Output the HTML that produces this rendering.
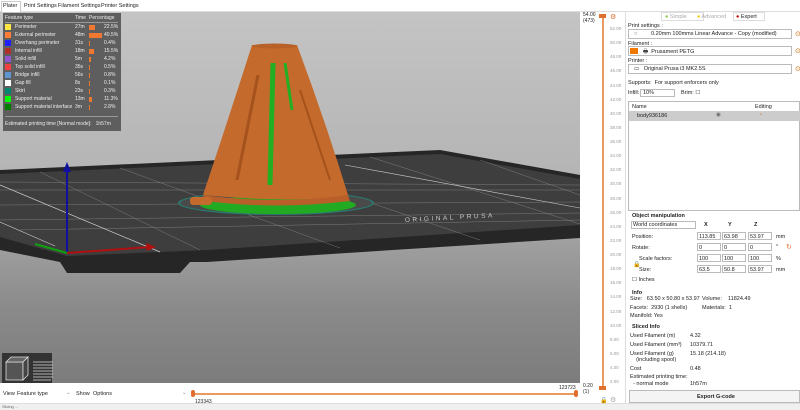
<!DOCTYPE html>
<html><head><meta charset="utf-8"><style>
*{margin:0;padding:0;box-sizing:border-box}
body{width:800px;height:410px;overflow:hidden;background:#fff;font-family:"Liberation Sans",sans-serif;font-size:5.5px;color:#222;position:relative}
.a{position:absolute;white-space:nowrap}
.box{position:absolute;border:1px solid #bbb;background:#fff}
.lg{color:#eee;font-size:5px}
.sw{position:absolute;width:6px;height:6px;left:5px}
</style></head><body>
<!-- tabs -->
<div class="a" style="left:0;top:0;width:800px;height:12px;background:#fff;border-bottom:1px solid #ddd"></div>
<div class="a" style="left:1px;top:1px;width:20px;height:11px;border:1px solid #ccc;border-bottom:none;background:#fff"></div>
<div class="a" style="left:3px;top:3px">Plater</div>
<div class="a" style="left:24px;top:3px">Print Settings</div>
<div class="a" style="left:58px;top:3px">Filament Settings</div>
<div class="a" style="left:101px;top:3px">Printer Settings</div>
<!-- canvas -->
<div class="a" style="left:0;top:12px;width:580px;height:371px;background:linear-gradient(#c4c4c4,#b4b4b4 45%,#8a8a8a 80%,#7c7c7c 100%)"></div>
<svg class="a" style="left:0;top:0" width="580" height="383">
<polygon points="0,170 440,150 580,175 580,238 207,262 190,262 180,273 67,273 60,262 0,250" fill="#262626"/>
<polygon points="0,174 440,154 580,179 580,225 207,250 67,256 0,237" fill="#3e3e3e"/>
<g stroke="#8a8a8a" stroke-width="0.4">
<line x1="0" y1="190" x2="580" y2="190"/><line x1="0" y1="205" x2="580" y2="202"/><line x1="0" y1="220" x2="580" y2="213"/>
<line x1="0" y1="182" x2="580" y2="185"/><line x1="20" y1="230" x2="580" y2="220"/>
<line x1="120" y1="168" x2="340" y2="248"/><line x1="250" y1="162" x2="480" y2="240"/><line x1="370" y1="157" x2="580" y2="224"/><line x1="40" y1="172" x2="200" y2="250"/><line x1="480" y1="160" x2="580" y2="195"/>
</g>
<line x1="0" y1="185" x2="160" y2="252" stroke="#cfcfcf" stroke-width="0.7"/>
<line x1="345" y1="165" x2="580" y2="208" stroke="#cfcfcf" stroke-width="0.6"/>
<line x1="0" y1="222" x2="55" y2="246" stroke="#cfcfcf" stroke-width="0.6"/>
<text x="405" y="222" fill="#c8c8c8" font-size="6.5" font-family="Liberation Sans" transform="rotate(-3 405 222)" letter-spacing="2.5">ORIGINAL PRUSA</text>
<ellipse cx="276" cy="203" rx="98" ry="12" fill="#2a7a70"/>
<ellipse cx="276" cy="203" rx="96" ry="10.5" fill="#4a4a4a"/>
<ellipse cx="278" cy="205" rx="78" ry="9" fill="#22aa22"/>
<path d="M252,45 L297,45 Q325,120 348,195 Q300,204 203,195 Q228,120 252,45 Z" fill="#c46a2c"/>
<ellipse cx="274.5" cy="46" rx="22.5" ry="2.5" fill="#b86028"/>
<path d="M203,195 Q276,205 348,195 L350,201 Q276,210 205,201 Z" fill="#b9602a"/>
<rect x="190" y="197" width="22" height="8" rx="3" fill="#c46a2c"/>
<line x1="273" y1="63" x2="270" y2="185" stroke="#22b022" stroke-width="5"/>
<line x1="285" y1="63" x2="292" y2="110" stroke="#22b022" stroke-width="3"/>
<line x1="258" y1="75" x2="237" y2="180" stroke="#a5521c" stroke-width="3"/>
<line x1="300" y1="90" x2="330" y2="180" stroke="#a5521c" stroke-width="2"/>
<line x1="67" y1="253" x2="67" y2="170" stroke="#1010a0" stroke-width="2"/><polygon points="63,172 71,172 67,162" fill="#1010a0"/>
<line x1="67" y1="253" x2="150" y2="247" stroke="#b01010" stroke-width="2"/><polygon points="146,243 156,247 147,251" fill="#b01010"/>
<line x1="67" y1="253" x2="35" y2="244" stroke="#10a010" stroke-width="2"/>
</svg>
<!-- legend -->
<div class="a" style="left:3px;top:13px;width:118px;height:118px;background:#5e5e5e"></div>
<div class="a lg" style="left:5px;top:15px">Feature type</div><div class="a lg" style="left:75px;top:15px">Time</div><div class="a lg" style="left:89px;top:15px">Percentage</div>
<div class="a" style="left:5px;top:22px;width:113px;height:1px;background:#999"></div>
<div class="a lg" style="left:0;top:24px;width:121px">
<div style="position:relative;height:8px"><span class="sw" style="background:#ffe640"></span><span class="a" style="left:15px">Perimeter</span><span class="a" style="left:75px">27m</span><span class="a" style="left:89px;width:6px;height:5px;background:#f07830;top:1px"></span><span class="a" style="left:104px">22.5%</span></div>
<div style="position:relative;height:8px"><span class="sw" style="background:#ff7d38"></span><span class="a" style="left:15px">External perimeter</span><span class="a" style="left:75px">48m</span><span class="a" style="left:89px;width:13px;height:5px;background:#f07830;top:1px"></span><span class="a" style="left:104px">40.5%</span></div>
<div style="position:relative;height:8px"><span class="sw" style="background:#1f1fff"></span><span class="a" style="left:15px">Overhang perimeter</span><span class="a" style="left:75px">31s</span><span class="a" style="left:89px;width:1px;height:5px;background:#f07830;top:1px"></span><span class="a" style="left:104px">0.4%</span></div>
<div style="position:relative;height:8px"><span class="sw" style="background:#b03029"></span><span class="a" style="left:15px">Internal infill</span><span class="a" style="left:75px">18m</span><span class="a" style="left:89px;width:5px;height:5px;background:#f07830;top:1px"></span><span class="a" style="left:104px">15.5%</span></div>
<div style="position:relative;height:8px"><span class="sw" style="background:#9654cc"></span><span class="a" style="left:15px">Solid infill</span><span class="a" style="left:75px">5m</span><span class="a" style="left:89px;width:2px;height:5px;background:#f07830;top:1px"></span><span class="a" style="left:104px">4.2%</span></div>
<div style="position:relative;height:8px"><span class="sw" style="background:#f04040"></span><span class="a" style="left:15px">Top solid infill</span><span class="a" style="left:75px">35s</span><span class="a" style="left:89px;width:1px;height:5px;background:#f07830;top:1px"></span><span class="a" style="left:104px">0.5%</span></div>
<div style="position:relative;height:8px"><span class="sw" style="background:#6096d0"></span><span class="a" style="left:15px">Bridge infill</span><span class="a" style="left:75px">56s</span><span class="a" style="left:89px;width:1px;height:5px;background:#f07830;top:1px"></span><span class="a" style="left:104px">0.8%</span></div>
<div style="position:relative;height:8px"><span class="sw" style="background:#fff"></span><span class="a" style="left:15px">Gap fill</span><span class="a" style="left:75px">8s</span><span class="a" style="left:89px;width:1px;height:5px;background:#f07830;top:1px"></span><span class="a" style="left:104px">0.1%</span></div>
<div style="position:relative;height:8px"><span class="sw" style="background:#00876e"></span><span class="a" style="left:15px">Skirt</span><span class="a" style="left:75px">23s</span><span class="a" style="left:89px;width:1px;height:5px;background:#f07830;top:1px"></span><span class="a" style="left:104px">0.3%</span></div>
<div style="position:relative;height:8px"><span class="sw" style="background:#00ff00"></span><span class="a" style="left:15px">Support material</span><span class="a" style="left:75px">13m</span><span class="a" style="left:89px;width:3px;height:5px;background:#f07830;top:1px"></span><span class="a" style="left:104px">11.3%</span></div>
<div style="position:relative;height:8px"><span class="sw" style="background:#008000"></span><span class="a" style="left:15px">Support material interface</span><span class="a" style="left:75px">3m</span><span class="a" style="left:89px;width:1px;height:5px;background:#f07830;top:1px"></span><span class="a" style="left:104px">2.8%</span></div>
</div>
<div class="a" style="left:5px;top:116px;width:113px;height:1px;background:#999"></div>
<div class="a lg" style="left:5px;top:121px">Estimated printing time [Normal mode]:&nbsp;&nbsp; 1h57m</div>
<!-- view cubes -->
<div class="a" style="left:2px;top:353px;width:50px;height:30px;background:#333"></div>
<svg class="a" style="left:3px;top:354px" width="50" height="30"><rect x="3" y="8" width="17" height="18" fill="#555" stroke="#ddd" stroke-width="0.8"/><polygon points="3,8 8,3 25,3 20,8" fill="#666" stroke="#ddd" stroke-width="0.8"/><polygon points="20,8 25,3 25,21 20,26" fill="#444" stroke="#ddd" stroke-width="0.8"/>
<g stroke="#ddd" stroke-width="0.7"><line x1="30" y1="8" x2="50" y2="8"/><line x1="30" y1="11" x2="50" y2="11"/><line x1="30" y1="14" x2="50" y2="14"/><line x1="30" y1="17" x2="50" y2="17"/><line x1="30" y1="20" x2="50" y2="20"/><line x1="30" y1="23" x2="50" y2="23"/><line x1="30" y1="26" x2="48" y2="26"/></g></svg>
<!-- bottom bar -->
<div class="a" style="left:0;top:383px;width:580px;height:20px;background:#fff"></div>
<div class="a" style="left:3px;top:391px">View</div><div class="a" style="left:17px;top:391px">Feature type</div><div class="a" style="left:66px;top:390px;color:#888">⌄</div>
<div class="a" style="left:76px;top:391px">Show</div><div class="a" style="left:93px;top:391px">Options</div><div class="a" style="left:182px;top:390px;color:#888">⌄</div>
<div class="a" style="left:193px;top:393px;width:383px;height:1.5px;background:#e89a60"></div>
<div class="a" style="left:191px;top:390px;width:4px;height:7px;background:#e07030;border-radius:2px"></div>
<div class="a" style="left:574px;top:390px;width:4px;height:7px;background:#e07030;border-radius:2px"></div>
<div class="a" style="left:195px;top:399px;font-size:5px">123343</div><div class="a" style="left:559px;top:385px;font-size:5px">123723</div>
<div class="a" style="left:0;top:403px;width:800px;height:7px;background:#f0f0f0;border-top:1px solid #ddd"></div>
<div class="a" style="left:2px;top:404px;font-size:4px;color:#666">Slicing ...</div>
<!-- vertical slider -->
<div class="a" style="left:580px;top:12px;width:45px;height:391px;background:#fff"></div>
<div class="a" style="left:583px;top:12px;font-size:5px;line-height:6px">54.00<br>(473)</div>
<div class="a" style="left:602px;top:16px;width:1.5px;height:372px;background:#e89a60"></div>
<div class="a" style="left:599px;top:14px;width:7px;height:4px;background:#e07030"></div>
<div class="a" style="left:599px;top:386px;width:7px;height:4px;background:#e07030"></div>
<div class="a" style="left:610px;top:13px;color:#e07030;font-size:7px">⚙</div>
<div class="a" style="left:583px;top:383px;font-size:5px;line-height:6px">0.20<br>(1)</div>
<div class="a" style="left:600px;top:397px;color:#e07030;font-size:6px">🔒</div>
<div class="a" style="left:610px;top:396px;color:#aaa;font-size:7px">⚙</div>
<div class="a" style="left:610px;top:22px;font-size:4.5px;color:#999;line-height:14.13px">52.00<br>50.00<br>48.00<br>46.00<br>44.00<br>42.00<br>40.00<br>38.00<br>36.00<br>34.00<br>32.00<br>30.00<br>28.00<br>26.00<br>24.00<br>22.00<br>20.00<br>18.00<br>16.00<br>14.00<br>12.00<br>10.00<br>8.00<br>6.00<br>4.00<br>2.00</div>
<!-- right panel -->
<div class="a" style="left:625px;top:12px;width:175px;height:391px;background:#fff;border-left:1px solid #ddd"></div>
<div class="a" style="left:661px;top:12px;width:43px;height:9px;border:1px solid #ddd"></div>
<div class="a" style="left:665px;top:14px;color:#aaa"><span style="color:#8c4">●</span> Simple</div>
<div class="a" style="left:697px;top:14px;color:#aaa"><span style="color:#ec0">●</span> Advanced</div>
<div class="a" style="left:733px;top:12px;width:32px;height:9px;border:1px solid #ddd"></div>
<div class="a" style="left:736px;top:14px"><span style="color:#b00">●</span> Expert</div>
<div class="a" style="left:628px;top:23px">Print settings :</div>
<div class="box" style="left:628px;top:29px;width:164px;height:10px"></div>
<div class="a" style="left:634px;top:31px;color:#666">○</div><div class="a" style="left:651px;top:31px">0.20mm 100mms Linear Advance - Copy (modified)</div>
<div class="a" style="left:795px;top:30px;color:#c60;font-size:7px">⊙</div>
<div class="a" style="left:628px;top:41px">Filament :</div>
<div class="box" style="left:628px;top:46px;width:164px;height:10px"></div>
<div class="a" style="left:630px;top:48px;width:8px;height:6px;background:#f07800"></div>
<div class="a" style="left:643px;top:48px">🖶&nbsp; Prusament PETG</div>
<div class="a" style="left:795px;top:47px;color:#c60;font-size:7px">⊙</div>
<div class="a" style="left:628px;top:58px">Printer :</div>
<div class="box" style="left:628px;top:64px;width:164px;height:10px"></div>
<div class="a" style="left:634px;top:66px">▭&nbsp;&nbsp; Original Prusa i3 MK2.5S</div>
<div class="a" style="left:795px;top:65px;color:#c60;font-size:7px">⊙</div>
<div class="a" style="left:628px;top:80px">Supports:&nbsp; For support enforcers only</div>
<div class="a" style="left:628px;top:90px">Infill:</div>
<div class="box" style="left:640px;top:89px;width:35px;height:8px"></div><div class="a" style="left:643px;top:90px">10%</div>
<div class="a" style="left:681px;top:90px">Brim: ☐</div>
<div class="box" style="left:628px;top:101px;width:172px;height:110px"></div>
<div class="a" style="left:632px;top:104px">Name</div><div class="a" style="left:755px;top:104px">Editing</div>
<div class="a" style="left:629px;top:111px;width:171px;height:10px;background:#ccc"></div>
<div class="a" style="left:637px;top:113px">body936186</div><div class="a" style="left:716px;top:112px;color:#666">◉</div><div class="a" style="left:760px;top:112px;color:#c60">▫</div>
<div class="a" style="left:632px;top:213px;font-weight:bold">Object manipulation</div>
<div class="box" style="left:631px;top:221px;width:65px;height:8px"></div><div class="a" style="left:633px;top:222px">World coordinates</div>
<div class="a" style="left:704px;top:222px;font-weight:bold">X</div><div class="a" style="left:728px;top:222px;font-weight:bold">Y</div><div class="a" style="left:754px;top:222px;font-weight:bold">Z</div>
<div class="a" style="left:632px;top:234px">Position:</div>
<div class="box" style="left:697px;top:232px;width:24px;height:8px"></div><div class="a" style="left:699px;top:234px">113.85</div>
<div class="box" style="left:722px;top:232px;width:24px;height:8px"></div><div class="a" style="left:724px;top:234px">63.98</div>
<div class="box" style="left:748px;top:232px;width:24px;height:8px"></div><div class="a" style="left:750px;top:234px">53.97</div><div class="a" style="left:776px;top:234px">mm</div>
<div class="a" style="left:632px;top:245px">Rotate:</div>
<div class="box" style="left:697px;top:243px;width:24px;height:8px"></div><div class="a" style="left:699px;top:245px">0</div>
<div class="box" style="left:722px;top:243px;width:24px;height:8px"></div><div class="a" style="left:724px;top:245px">0</div>
<div class="box" style="left:748px;top:243px;width:24px;height:8px"></div><div class="a" style="left:750px;top:245px">0</div><div class="a" style="left:776px;top:244px">°</div><div class="a" style="left:786px;top:243px;color:#e07030;font-size:7px">↻</div>
<div class="a" style="left:639px;top:256px">Scale factors:</div><div class="a" style="left:633px;top:261px;font-size:6px">🔒</div>
<div class="box" style="left:697px;top:254px;width:24px;height:8px"></div><div class="a" style="left:699px;top:256px">100</div>
<div class="box" style="left:722px;top:254px;width:24px;height:8px"></div><div class="a" style="left:724px;top:256px">100</div>
<div class="box" style="left:748px;top:254px;width:24px;height:8px"></div><div class="a" style="left:750px;top:256px">100</div><div class="a" style="left:776px;top:256px">%</div>
<div class="a" style="left:639px;top:267px">Size:</div>
<div class="box" style="left:697px;top:265px;width:24px;height:8px"></div><div class="a" style="left:699px;top:267px">63.5</div>
<div class="box" style="left:722px;top:265px;width:24px;height:8px"></div><div class="a" style="left:724px;top:267px">50.8</div>
<div class="box" style="left:748px;top:265px;width:24px;height:8px"></div><div class="a" style="left:750px;top:267px">53.97</div><div class="a" style="left:776px;top:267px">mm</div>
<div class="a" style="left:632px;top:277px">☐ Inches</div>
<div class="a" style="left:632px;top:290px;font-weight:bold">Info</div>
<div class="a" style="left:630px;top:296px">Size:&nbsp;&nbsp; 63.50 x 50.80 x 53.97</div><div class="a" style="left:702px;top:296px">Volume:&nbsp;&nbsp;&nbsp; 11824.49</div>
<div class="a" style="left:630px;top:305px">Facets:&nbsp; 2930 (1 shells)</div><div class="a" style="left:702px;top:305px">Materials:&nbsp; 1</div>
<div class="a" style="left:630px;top:313px">Manifold: Yes</div>
<div class="a" style="left:632px;top:324px;font-weight:bold">Sliced Info</div>
<div class="a" style="left:630px;top:333px">Used Filament (m)</div><div class="a" style="left:690px;top:333px">4.32</div>
<div class="a" style="left:630px;top:342px">Used Filament (mm³)</div><div class="a" style="left:690px;top:342px">10379.71</div>
<div class="a" style="left:630px;top:351px;line-height:6px">Used Filament (g)<br>&nbsp;&nbsp;&nbsp;&nbsp;(including spool)</div><div class="a" style="left:690px;top:351px">15.18 (214.18)</div>
<div class="a" style="left:630px;top:366px">Cost</div><div class="a" style="left:690px;top:366px">0.48</div>
<div class="a" style="left:630px;top:374px;line-height:6.5px">Estimated printing time:<br>&nbsp;&nbsp;- normal mode</div><div class="a" style="left:690px;top:381px">1h57m</div>
<div class="box" style="left:629px;top:390px;width:171px;height:13px;background:#f4f4f4"></div>
<div class="a" style="left:697px;top:394px;font-weight:bold">Export G-code</div>
</body></html>
